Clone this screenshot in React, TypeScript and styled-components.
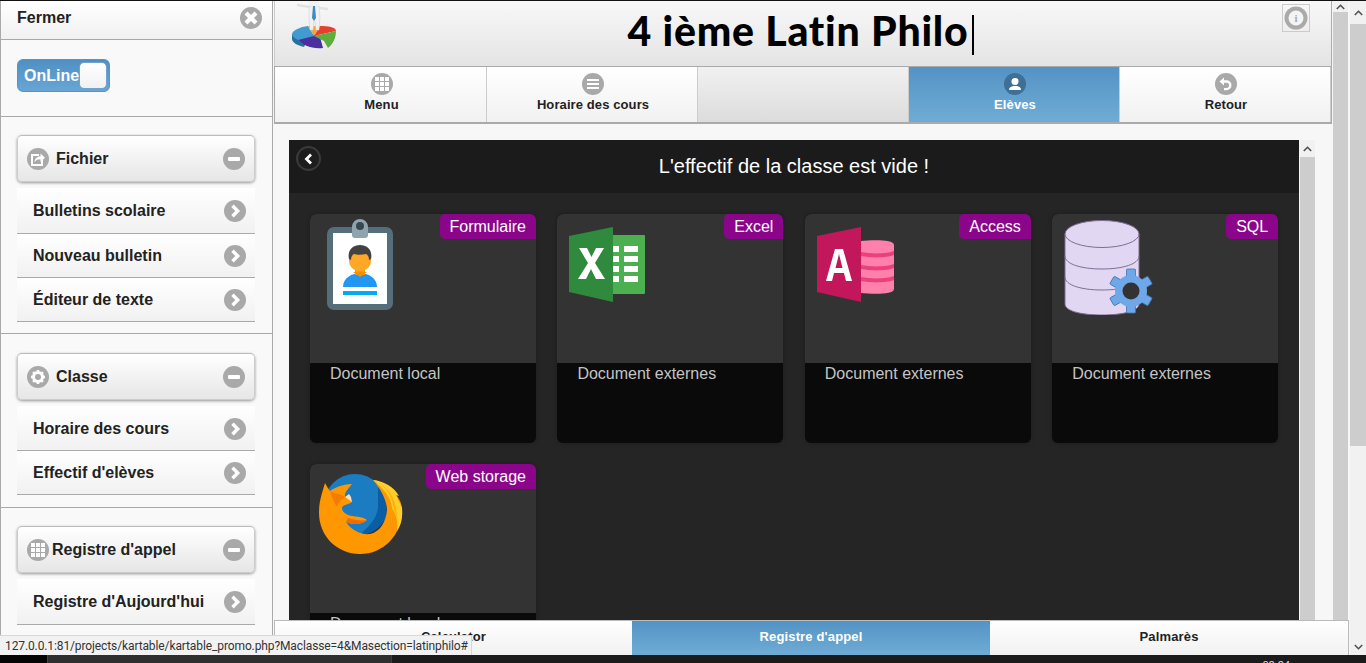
import React from "react";
import styled, { createGlobalStyle } from "styled-components";

const Global = createGlobalStyle`
  html, body { margin: 0; padding: 0; overflow: hidden; background: #1a1a1a; }
  * { box-sizing: border-box; }
  body { font-family: "Liberation Sans", Arial, sans-serif; }
`;

const Page = styled.div`
  width: 1366px; height: 663px; position: relative; overflow: hidden;
  display: flex; flex-direction: column; background: #f7f7f7;
  border-top: 1px solid #111;
`;
const Work = styled.div`
  height: 654px; display: flex; overflow: hidden;
`;
const Sidebar = styled.aside`
  width: 273px; flex: none; margin-right: 1px; background: #f9f9f9; overflow: hidden;
  border-left: 1px solid #aaa; border-right: 1px solid #aaa;
`;
const CloseBar = styled.div`
  height: 39px; display: flex; align-items: center; justify-content: space-between;
  padding: 0 10px 5px 16px; border-bottom: 1px solid #a8a8a8;
  background: linear-gradient(#fff, #f1f1f1);
  font-size: 16px; font-weight: bold; color: #222;
`;
const ToggleRow = styled.div`
  height: 77px; padding: 19px 0 0 16px; border-bottom: 1px solid #a8a8a8;
`;
const Toggle = styled.div`
  width: 93px; height: 33px; border-radius: 6px; background: linear-gradient(#4f90c4, #68a5d5);
  border: 1px solid #5b93bf; display: flex; align-items: center; justify-content: space-between;
  padding: 0 2px 0 6px; color: #fff; font-size: 16px; font-weight: bold;
`;
const Knob = styled.span`
  width: 28px; height: 27px; border-radius: 5px; margin-left: -3px;
  background: linear-gradient(#fff, #f1f1f1); border: 1px solid #6fa3cd;
`;
const Section = styled.section<{ $h: number; $top?: number }>`
  height: ${(p) => p.$h}px; padding: ${(p) => p.$top ?? 18}px 17px 0 16px; border-bottom: 1px solid #a8a8a8;
`;
const SectionHead = styled.div`
  height: 47px; display: flex; align-items: center; gap: 6px; padding: 0 9px;
  border-radius: 5px; border: 1px solid #ccc; border-top-color: #bbb;
  background: linear-gradient(#fff, #e6e6e6);
  box-shadow: 0 1px 3px rgba(0,0,0,.4);
  font-size: 16px; font-weight: bold; color: #222;
  margin-bottom: 6px;
`;
const SectionTitle = styled.span<{ $tight?: boolean }>`
  flex: 1; margin-left: ${(p) => (p.$tight ? "-3px" : "1px")};
`;
const ListItem = styled.div<{ $h?: number; $pt?: number }>`
  height: ${(p) => p.$h ?? 44}px; display: flex; align-items: center; justify-content: space-between;
  padding: ${(p) => p.$pt ?? 0}px 9px 0 16px; background: linear-gradient(#fff, #f1f1f1);
  border-bottom: 1px solid #aaa;
  font-size: 16px; font-weight: bold; color: #222;
`;
const Round = styled.span<{ $size?: number; $bg?: string }>`
  width: ${(p) => p.$size ?? 22}px; height: ${(p) => p.$size ?? 22}px; flex: none;
  display: inline-flex; align-items: center; justify-content: center;
  border-radius: 50%; background: ${(p) => p.$bg ?? "#a9a9a9"};
  svg { display: block; }
`;

const Main = styled.main`
  flex: 1; min-width: 0; position: relative; display: flex; flex-direction: column; overflow: hidden;
`;
const MainRow = styled.div`
  flex: 1; min-height: 0; display: flex; overflow: hidden;
`;
const MainColumn = styled.div`
  width: 1058px; flex: none; margin-right: 1px; display: flex; flex-direction: column; overflow: hidden;
`;
const Header = styled.header`
  height: 65px; display: flex; align-items: center; position: relative;
  background: linear-gradient(#f8f8f8, #e4e4e4); border-right: 1px solid #aaa; border-left: 1px solid #ccc;
`;
const LogoBox = styled.div`
  position: absolute; left: 17px; top: 0; width: 46px; height: 48px;
`;
const Title = styled.h1`
  margin: 0; flex: 1; text-align: center; padding: 0 4px 5px 0;
  font-family: "Lato", sans-serif; font-weight: 900; font-size: 41px; letter-spacing: .75px; line-height: 60px; color: #000;
`;
const Caret = styled.span`
  display: inline-block; width: 2px; height: 40px; background: #000; vertical-align: -9px; margin-left: 4px;
`;
const InfoBox = styled.div`
  position: absolute; right: 21px; top: 3px; width: 28px; height: 28px; border: 1px solid #ccc;
  display: flex; align-items: center; justify-content: center;
`;
const Nav = styled.nav`
  height: 58px; display: grid; grid-template-columns: 212px repeat(4, 211px);
  border: 1px solid #aaa; border-bottom-width: 2px;
`;
const NavItem = styled.div<{ $kind?: "on" | "blank" }>`
  display: flex; flex-direction: column; align-items: center; padding: 6px 0 0 2px;
  border-right: 1px solid #ccc; gap: 2px;
  font-size: 13px; font-weight: bold; letter-spacing: .1px;
  color: ${(p) => (p.$kind === "on" ? "#fff" : "#222")};
  background: ${(p) =>
    p.$kind === "on" ? "linear-gradient(#5393c5, #6facd5)" :
    p.$kind === "blank" ? "linear-gradient(#f1f1f1, #dcdcdc)" :
    "linear-gradient(#fff, #f1f1f1)"};
`;
const ContentRow = styled.div`
  flex: 1; min-height: 0; display: flex; padding: 16px 17px 0 15px; background: #f7f7f7; gap: 1px;
`;
const Panel = styled.div`
  flex: 1; min-width: 0; background: #252525; overflow: hidden;
`;
const PanelHead = styled.div`
  height: 53px; position: relative; background: #1b1b1b; color: #fff;
  display: flex; align-items: center; justify-content: center; font-size: 20px; padding-bottom: 0;
`;
const BackButton = styled.span`
  position: absolute; left: 7px; top: 6px; width: 25px; height: 25px; border-radius: 50%;
  background: #1d1d1d; border: 2px solid #3a3a3a;
  display: flex; align-items: center; justify-content: center;
`;
const CardGrid = styled.div`
  display: grid; grid-template-columns: repeat(4, 226px); column-gap: 21.4px; row-gap: 21px; padding: 21px 0 0 21px;
`;
const Card = styled.article`
  height: 229px; border-radius: 6px; overflow: hidden; position: relative;
  display: flex; flex-direction: column; background: #0a0a0a; box-shadow: 0 0 4px rgba(0,0,0,.25);
`;
const CardImage = styled.div`
  height: 149px; flex: none; background: #333; padding: 0;
`;
const Art = styled.svg<{ $w: number; $h: number; $x: number; $y: number }>`
  display: block; width: ${(p) => p.$w}px; height: ${(p) => p.$h}px;
  margin-left: ${(p) => p.$x}px; margin-top: ${(p) => p.$y}px;
`;
const Badge = styled.span`
  position: absolute; top: 0; right: 0; height: 25px; padding: 0 10px; line-height: 25px;
  background: #8b058b; color: #fff; font-size: 16px; border-radius: 5px 5px 0 5px;
`;
const Caption = styled.div`
  padding: 1px 0 0 20px; color: #c4c4c4; font-size: 16px; line-height: 20px;
`;
const Track = styled.div<{ $w: number; $gap?: number }>`
  width: ${(p) => p.$w}px; flex: none; display: flex; flex-direction: column; background: #f1f1f1;
  margin-right: ${(p) => p.$gap ?? 0}px;
`;
const Arrow = styled.div<{ $h?: number }>`
  height: ${(p) => p.$h ?? 17}px; display: flex; align-items: center; justify-content: center; flex: none;
  overflow: hidden;
`;
const Thumb = styled.div<{ $h?: number }>`
  background: #cdcdcd;
  ${(p) => (p.$h ? `height: ${p.$h}px; flex: none;` : "flex: 1;")}
`;
const TrackRest = styled.div`
  flex: 1;
`;
const Footer = styled.footer`
  position: absolute; left: 0; bottom: 0; width: 1075px; height: 35px; display: flex;
  border: 1px solid #bbb; border-bottom: 0; background: #fff;
`;
const FooterTab = styled.div<{ $on?: boolean; $w: number }>`
  width: ${(p) => p.$w}px; flex: none; display: flex; align-items: center; justify-content: center;
  padding-bottom: 4px;
  font-size: 13px; font-weight: bold; letter-spacing: .15px; color: ${(p) => (p.$on ? "#fff" : "#222")};
  background: ${(p) => (p.$on ? "linear-gradient(#5393c5, #6facd5)" : "linear-gradient(#fff, #f1f1f1)")};
`;
const Taskbar = styled.div`
  height: 8px; flex: none; display: flex; background: #1b1b1b; overflow: hidden;
`;
const StartArea = styled.div`
  width: 48px; background: #050505; border-right: 1px solid #444;
`;
const TaskGroup = styled.div`
  width: 344px; background: #2f2f2f; border-right: 1px solid #3c3c3c;
`;
const Clock = styled.div`
  margin-left: auto; margin-right: 76px; margin-top: 4px; color: #ddd; font-size: 11px; line-height: 13px;
`;
const StatusTip = styled.div`
  position: absolute; left: 0; bottom: 8px; width: 472px; height: 20px; padding: 3px 0 0 5px;
  background: #f2f2f2; border: 1px solid #d8d8d8; border-left: 0; border-bottom: 0;
  color: #333; font-size: 12px; line-height: 15px; font-family: "Roboto", sans-serif; white-space: nowrap;
  letter-spacing: -.11px;
`;

const Minus = () => (
  <Round><svg width="14" height="14" viewBox="0 0 14 14"><rect x="1" y="5" width="12" height="4" rx="1" fill="#fff" /></svg></Round>
);
const Chevron = () => (
  <Round><svg width="16" height="16" viewBox="0 0 16 16"><path d="M5.500 2.800 10.700 8l-5.200 5.200" fill="none" stroke="#fff" strokeWidth="3.400" /></svg></Round>
);
const GridIcon = ({ size = 22 }: { size?: number }) => (
  <Round $size={size}>
    <svg width="14" height="14" viewBox="0 0 14 14" fill="#fff">
      {[0, 5, 10].flatMap((x) => [0, 5, 10].map((y) => <rect key={`${x}${y}`} x={x} y={y} width="4" height="4" />))}
    </svg>
  </Round>
);
const ShareIcon = () => (
  <Round>
    <svg width="16" height="16" viewBox="0 0 16 16">
      <path d="M9 4H2v10h10V9" fill="none" stroke="#fff" strokeWidth="2" />
      <path d="M4.500 11c.2-3.600 2.800-5.600 6-5.600V2.500L15 6.800l-4.500 4.300V8.300C8.200 8.300 6 9 4.500 11z" fill="#fff" />
    </svg>
  </Round>
);
const GearIcon = ({ fill = "#fff", bg = "#a9a9a9" }: { fill?: string; bg?: string }) => (
  <Round>
    <svg width="16" height="16" viewBox="0 0 16 16">
      <circle cx="8" cy="8" r="4.500" fill="none" stroke={fill} strokeWidth="3" />
      {[0, 45, 90, 135].map((a) => (
        <rect key={a} x="6.700" y="1" width="2.600" height="14" fill={fill} transform={`rotate(${a} 8 8)`} />
      ))}
      <circle cx="8" cy="8" r="3" fill={bg} />
    </svg>
  </Round>
);

const CardArtId = () => (
  <Art $w={70} $h={96} $x={16} $y={5} viewBox="0 0 70 96">
    <rect x="1" y="8" width="66" height="83" rx="7" fill="#546e7a" />
    <rect x="7" y="14" width="54" height="71" fill="#fff" />
    <path d="M26 17V8a8 8 0 0 1 16 0v9a3 3 0 0 1-3 2H29a3 3 0 0 1-3-2z" fill="#90a4ae" />
    <circle cx="34" cy="7" r="4" fill="#37474f" />
    <path d="M17 68c0-9 9-14 17-14s17 5 17 14z" fill="#2196f3" />
    <rect x="29" y="46" width="10" height="10" fill="#ff9800" />
    <path d="M34 58l-7-5h14z" fill="#ef8f00" />
    <rect x="23" y="28" width="22" height="24" rx="10" fill="#ffa726" />
    <path d="M23 40c-2-9 4-14 11-14s13 5 11 14l-2 1c0-3-1-5-3-6-4 1-9 1-12 0-2 1-3 3-3 6z" fill="#424242" />
    <rect x="17" y="72" width="34" height="4" fill="#03a9f4" />
  </Art>
);
const CardArtExcel = () => (
  <Art $w={76} $h={75} $x={12} $y={13} viewBox="0 0 76 75">
    <rect x="40" y="8" width="36" height="59" rx="1" fill="#4caf50" />
    <path d="M44 0v75L0 65V9z" fill="#2f8a3e" />
    <g fill="#fff">
      <path d="M9 52 19 36 10 21h8l4.500 9 4.500-9h8L26 36l10 16h-9l-5-10-5 10z" />
      <rect x="44" y="19" width="6" height="6" /><rect x="55" y="19" width="14" height="6" />
      <rect x="44" y="29" width="6" height="6" /><rect x="55" y="29" width="14" height="6" />
      <rect x="44" y="39" width="6" height="6" /><rect x="55" y="39" width="14" height="6" />
      <rect x="44" y="49" width="6" height="6" /><rect x="55" y="49" width="14" height="6" />
    </g>
  </Art>
);
const CardArtAccess = () => (
  <Art $w={77} $h={75} $x={12} $y={13} viewBox="0 0 77 75">
    <path d="M44 14c10-1 33-2 33 4v44c0 6-23 5-33 4z" fill="#ff80ab" />
    <path d="M44 25c10 2 26 2 33-1v4c-7 3-23 3-33 1zM44 38c10 2 26 2 33-1v4c-7 3-23 3-33 1zM44 50c10 2 26 2 33-1v4c-7 3-23 3-33 1z" fill="#ec407a" />
    <path d="M44 0v75L0 65V9z" fill="#c2185b" />
    <path d="M9 54 18 22h8l9 32h-6l-2-8H17l-2 8zM18.500 41h7L22 27z" fill="#fff" fillRule="evenodd" />
  </Art>
);
const CardArtSql = () => (
  <Art $w={90} $h={96} $x={12} $y={5} viewBox="0 0 90 96">
    <path d="M1 15v70c0 7 16 11 37 11s37-4 37-11V15z" fill="#e1d7f2" stroke="#7e6e92" strokeWidth="1" />
    <ellipse cx="38" cy="15" rx="37" ry="13.500" fill="#e1d7f2" stroke="#7e6e92" strokeWidth="1" />
    <path d="M1 37c0 8 16 13 37 13s37-5 37-13M1 58c0 8 16 13 37 13s37-5 37-13" fill="none" stroke="#7e6e92" strokeWidth="1" />
    <g transform="translate(67 72)">
      <g fill="#6fa8e8" stroke="#3f73ad" strokeWidth=".8">
        {[0, 60, 120].map((a) => <rect key={a} x="-4.500" y="-22" width="9" height="44" rx="1" transform={`rotate(${a})`} />)}
      </g>
      <circle r="16" fill="#6fa8e8" />
      <circle r="8.500" fill="#333" />
    </g>
  </Art>
);
const CardArtFox = () => (
  <Art $w={86} $h={84} $x={8} $y={8} viewBox="0 0 86 84">
    <circle cx="37" cy="33" r="31" fill="#1c7cc2" />
    <path d="M60 14C68 24 70 38 68 46 63 56 52 63 40 64 50 56 60 46 60 34Z" fill="#0a5ea6" />
    <path d="M1 41C1 31 3 24 7 11 9 14 10 17 12 19 18 15 26 12 34 12 30 17 26 21 27 25 30 26 33 28 34 30 30 33 25 32 24 36 24 40 27 41 30 43 36 45 44 44 49 48 44 53 34 53 28 50 33 58 43 63 52 62 62 60 68 50 69 38 69 28 62 16 55 8 70 12 83 24 84 36 85 62 66 82 42 82 19 82 1 64 1 41Z" fill="#ff9800" />
    <path d="M55 8C66 9 76 15 81 24L78 23 84 36C85 46 83 53 79 59 80 50 79 44 74 36 74 26 64 15 55 8Z" fill="#ffcd2e" />
    <path d="M62 12C70 18 74 26 75 34L79 46C79 38 77 30 74 24 71 19 67 15 62 12Z" fill="#ffb300" />
    <path d="M34 30 27 25 31 22 33 25Z" fill="#ffe0b8" />
    <path d="M12 19C16 22 21 21 27 25 23 27 20 31 19 35 16 31 14 25 12 19Z" fill="#f57c00" />
    <path d="M28 50C34 53 44 53 49 48 44 49 36 48 30 46Z" fill="#ef6c00" />
  </Art>
);

const LogoArt = () => (
  <svg width="46" height="48" viewBox="0 0 46 48">
    <path d="M0 33v5c0 3 4 6 12 8l4-8z" fill="#2b6f9f" />
    <path d="M6 37C10 45 20 48 31 47L28 36 14 30Z" fill="#4b2f9e" />
    <path d="M22 35 44 30C44 26 36 25 28 25Z" fill="#e8402f" />
    <path d="M22 35 44 30C44 37 41 43 36 47L32 40Z" fill="#5fae3d" />
    <path d="M0 33C1 29 8 26 16 25L22 35 6 39C2 37 0 35 0 33Z" fill="#3f9bd0" />
    <path d="M16 25 28 25 22 35Z" fill="#f0a540" />
    <path d="M17 5h10l1 11-1 13h-3l-1-9h-1l-1 9h-3l-1-13z" fill="#f1f1f1" stroke="#ccc" strokeWidth=".5" />
    <circle cx="22" cy="1" r="5" fill="#f1f1f1" />
    <path d="M21 5h2l1 12-2 3-2-3z" fill="#3a8dc4" />
    <path d="M18 6 5 4M27 7l9 1" stroke="#e2e2e2" strokeWidth="2.500" />
  </svg>
);

const items = [
  { badge: "Formulaire", art: <CardArtId />, caption: "Document local" },
  { badge: "Excel", art: <CardArtExcel />, caption: "Document externes" },
  { badge: "Access", art: <CardArtAccess />, caption: "Document externes" },
  { badge: "SQL", art: <CardArtSql />, caption: "Document externes" },
  { badge: "Web storage", art: <CardArtFox />, caption: "Document local" },
];

const ScrollUp = () => (
  <svg width="9" height="6" viewBox="0 0 9 6"><path d="M.8 5 4.500 1.300 8.200 5" fill="none" stroke="#505050" strokeWidth="1.600" /></svg>
);
const ScrollDown = () => (
  <svg width="9" height="6" viewBox="0 0 9 6"><path d="M.8 1 4.500 4.700 8.200 1" fill="none" stroke="#505050" strokeWidth="1.600" /></svg>
);

export default function App() {
  return (
    <Page>
      <Global />
      <Work>
        <Sidebar>
          <CloseBar>
            Fermer
            <Round>
              <svg width="16" height="16" viewBox="0 0 16 16"><path d="M3 3l10 10M13 3L3 13" stroke="#fff" strokeWidth="4.200" /></svg>
            </Round>
          </CloseBar>
          <ToggleRow>
            <Toggle>OnLine<Knob /></Toggle>
          </ToggleRow>
          <Section $h={217}>
            <SectionHead><ShareIcon /><SectionTitle>Fichier</SectionTitle><Minus /></SectionHead>
            <ListItem $h={46}>Bulletins scolaire<Chevron /></ListItem>
            <ListItem>Nouveau bulletin<Chevron /></ListItem>
            <ListItem>Éditeur de texte<Chevron /></ListItem>
          </Section>
          <Section $h={174} $top={19}>
            <SectionHead><GearIcon /><SectionTitle>Classe</SectionTitle><Minus /></SectionHead>
            <ListItem $h={45} $pt={1}>Horaire des cours<Chevron /></ListItem>
            <ListItem>Effectif d'elèves<Chevron /></ListItem>
          </Section>
          <Section $h={200}>
            <SectionHead><GridIcon /><SectionTitle $tight>Registre d'appel</SectionTitle><Minus /></SectionHead>
            <ListItem $h={46}>Registre d'Aujourd'hui<Chevron /></ListItem>
          </Section>
        </Sidebar>
        <Main>
          <MainRow>
            <MainColumn>
              <Header>
                <LogoBox><LogoArt /></LogoBox>
                <Title>4 ième Latin Philo<Caret /></Title>
                <InfoBox>
                  <svg width="24" height="24" viewBox="0 0 24 24">
                    <circle cx="12" cy="12" r="9.500" fill="#f4f4f4" stroke="#aaa" strokeWidth="4" />
                    <text x="12" y="16" textAnchor="middle" fontSize="11" fontWeight="bold" fill="#aaa" fontFamily="Liberation Serif">i</text>
                  </svg>
                </InfoBox>
              </Header>
              <Nav>
                <NavItem><GridIcon />Menu</NavItem>
                <NavItem>
                  <Round><svg width="14" height="14" viewBox="0 0 14 14"><path d="M1 3h12M1 7h12M1 11h12" stroke="#fff" strokeWidth="2" /></svg></Round>
                  Horaire des cours
                </NavItem>
                <NavItem $kind="blank" />
                <NavItem $kind="on">
                  <Round $bg="#3f6f94"><svg width="14" height="14" viewBox="0 0 14 14" fill="#fff"><circle cx="7" cy="4.500" r="3.500" /><path d="M1 13c0-3 3-4 6-4s6 1 6 4z" /></svg></Round>
                  Elèves
                </NavItem>
                <NavItem>
                  <Round><svg width="16" height="16" viewBox="0 0 16 16"><path d="M6 1.500 1.500 5.500 6 9.500z" fill="#fff" /><path d="M4 5.500h4.500a3.800 3.800 0 0 1 0 7.600H6" fill="none" stroke="#fff" strokeWidth="2.400" /></svg></Round>
                  Retour
                </NavItem>
              </Nav>
              <ContentRow>
                <Panel>
                  <PanelHead>
                    <BackButton><svg width="12" height="12" viewBox="0 0 12 12"><path d="M8 1.500 3.500 6 8 10.500" fill="none" stroke="#fff" strokeWidth="2.800" /></svg></BackButton>
                    L'effectif de la classe est vide !
                  </PanelHead>
                  <CardGrid>
                    {items.map((it) => (
                      <Card key={it.badge}>
                        <CardImage>{it.art}</CardImage>
                        <Badge>{it.badge}</Badge>
                        <Caption>{it.caption}</Caption>
                      </Card>
                    ))}
                  </CardGrid>
                </Panel>
                <Track $w={15}>
                  <Arrow><ScrollUp /></Arrow>
                  <Thumb />
                </Track>
              </ContentRow>
            </MainColumn>
            <Track $w={15} $gap={2}><Arrow $h={11}><ScrollUp /></Arrow><Thumb /></Track>
            <Track $w={16}>
              <Arrow $h={23}><ScrollUp /></Arrow>
              <Thumb $h={422} />
              <TrackRest />
              <Arrow><ScrollDown /></Arrow>
            </Track>
          </MainRow>
          <Footer>
            <FooterTab $w={357}>Calculator</FooterTab>
            <FooterTab $w={358} $on>Registre d'appel</FooterTab>
            <FooterTab $w={358}>Palmarès</FooterTab>
          </Footer>
        </Main>
      </Work>
      <Taskbar>
        <StartArea />
        <TaskGroup />
        <Clock>02:24</Clock>
      </Taskbar>
      <StatusTip>127.0.0.1:81/projects/kartable/kartable_promo.php?Maclasse=4&amp;Masection=latinphilo#</StatusTip>
    </Page>
  );
}
